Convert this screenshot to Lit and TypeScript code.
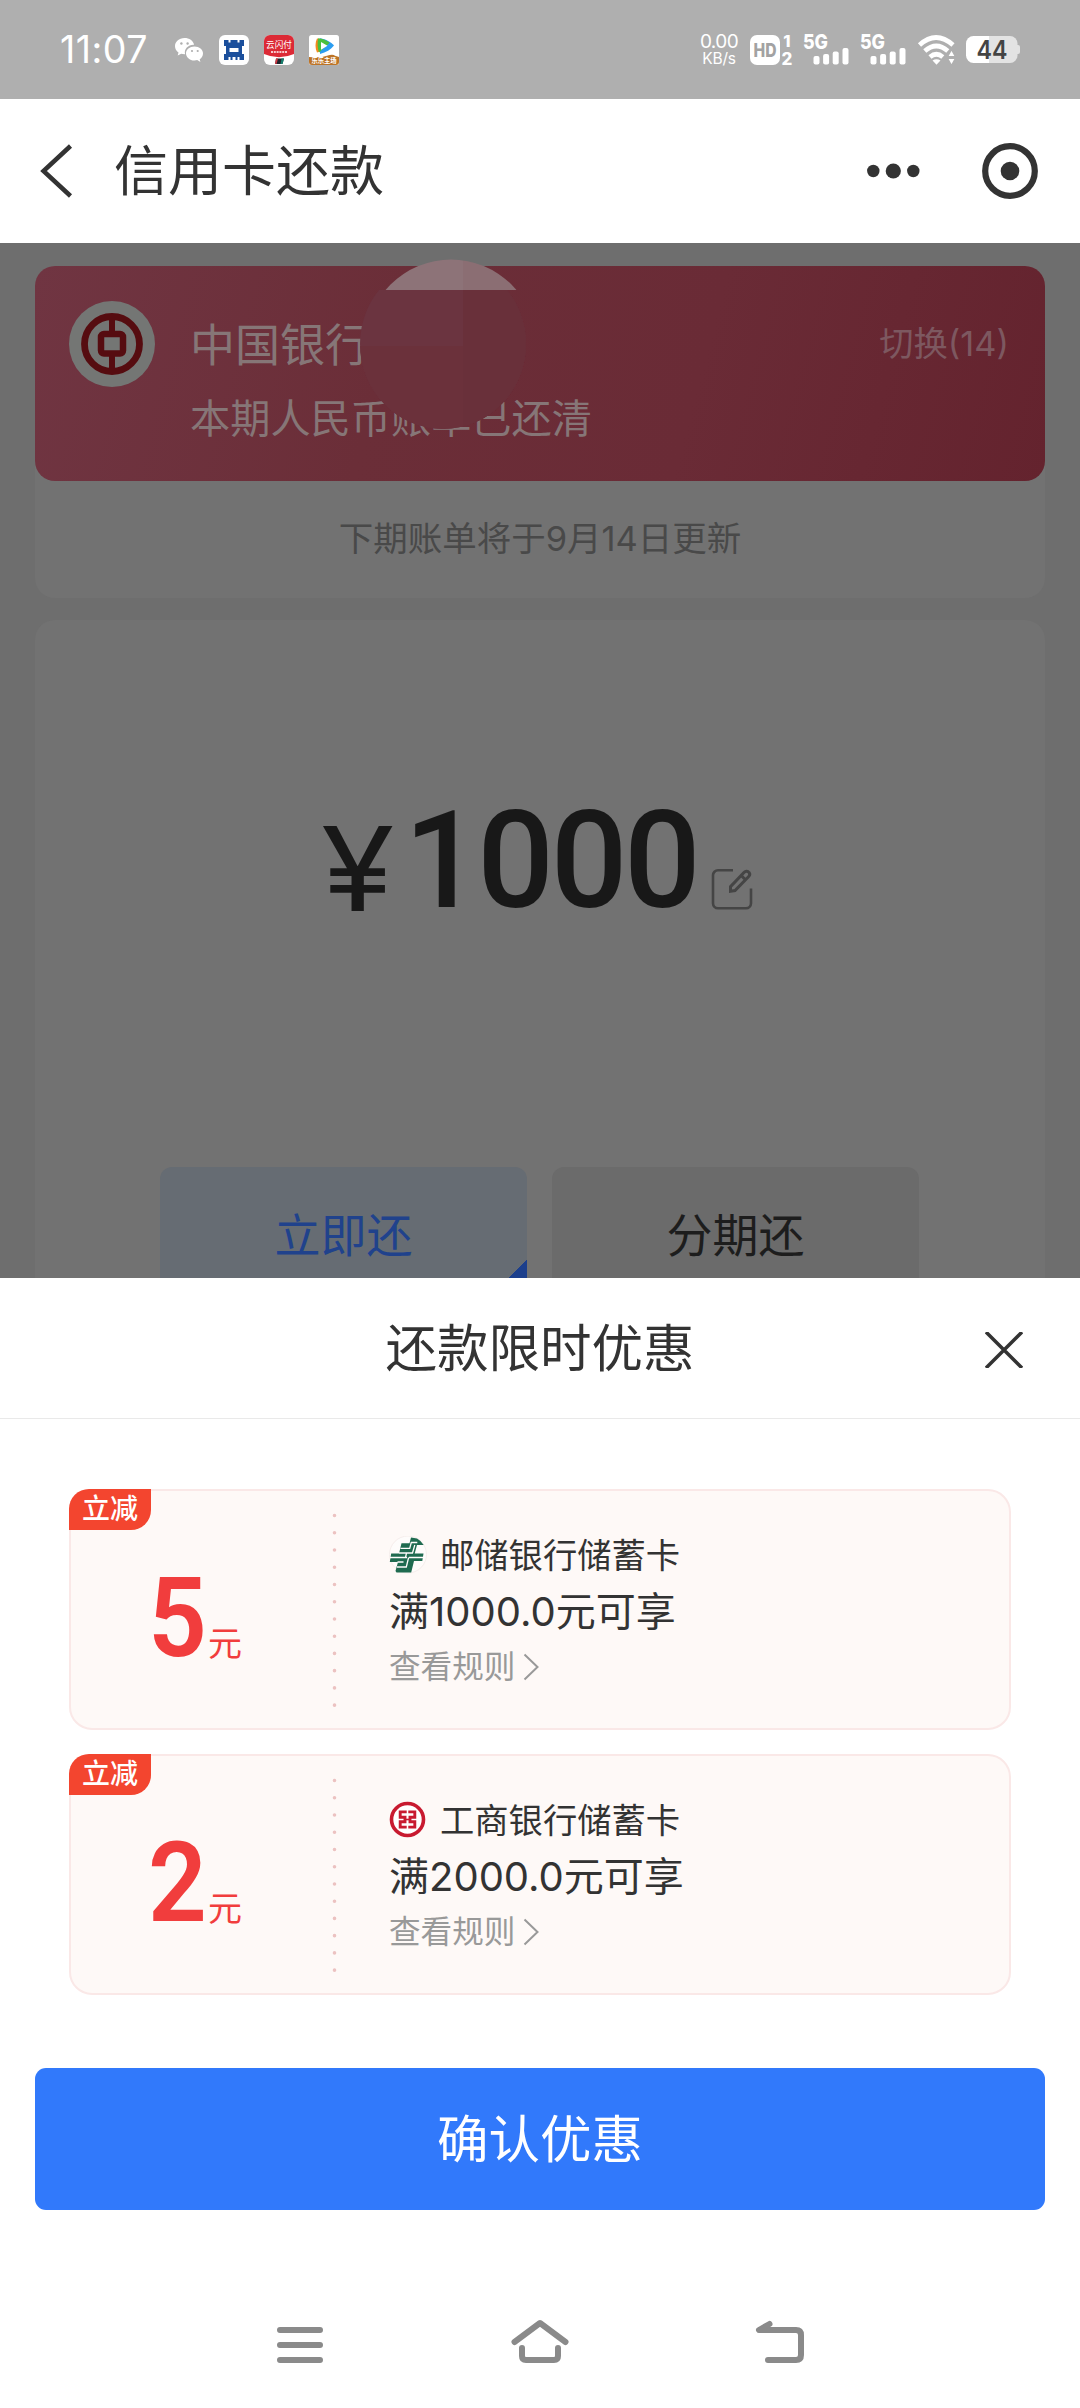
import { LitElement, html, css, svg } from "lit";
import { customElement, property } from "lit/decorators.js";

interface Coupon {
  amount: string;
  bank: string;
  logo: "psbc" | "icbc";
  condition: string;
}

const COUPONS: Coupon[] = [
  { amount: "5", bank: "邮储银行储蓄卡", logo: "psbc", condition: "满1000.0元可享" },
  { amount: "2", bank: "工商银行储蓄卡", logo: "icbc", condition: "满2000.0元可享" },
];

const signalBars = svg`
  <rect x="0" y="8" width="6" height="8.6" rx="2" />
  <rect x="9.6" y="6" width="6" height="10.6" rx="2" />
  <rect x="19.2" y="3.4" width="6" height="13.2" rx="2" />
  <rect x="29" y="0" width="6" height="16.6" rx="2" />`;

@customElement("status-bar")
export class StatusBar extends LitElement {
  static styles = css`
    :host {
      display: flex;
      height: 99px;
      box-sizing: border-box;
      padding: 0 60px;
      background: #afafaf;
      color: #fff;
      align-items: center;
      justify-content: space-between;
      font-family: Inter, "Noto Sans CJK SC", sans-serif;
    }
    .left,
    .right {
      display: flex;
      align-items: center;
    }
    .time {
      width: 114px;
      font-size: 37.500px;
      line-height: 46px;
      letter-spacing: 0.5px;
      white-space: nowrap;
    }
    .apps {
      display: flex;
      gap: 15px;
      align-items: center;
    }
    svg {
      display: block;
      overflow: visible;
    }
    .speed {
      display: flex;
      width: 40px;
      flex-direction: column;
      align-items: center;
      margin-right: 11px;
      white-space: nowrap;
    }
    .rate {
      font-size: 19px;
      line-height: 19px;
      letter-spacing: -0.6px;
    }
    .unit {
      font-size: 15.500px;
      line-height: 16px;
      letter-spacing: -0.2px;
    }
    .hd {
      margin-right: 11px;
    }
    .cell {
      margin-right: 12px;
    }
    .wifi {
      margin-right: 10px;
    }
  `;

  render() {
    return html`
      <div class="left">
        <div class="time">11:07</div>
        <div class="apps">
          <svg width="30" height="30" viewBox="0 0 30 30">
            <path fill="#fff" d="M10.500 3C4.900 3 1 6.700 1 11.200c0 2.600 1.300 4.800 3.500 6.300L3.700 20.500l3.500-1.800c1 .3 2.100.5 3.300.5h.6c-1.400-5.500 3.600-9.900 9-9.500C19.200 5.700 15.300 3 10.500 3z" />
            <path fill="#fff" d="M29 18.200c0-3.800-3.700-6.800-8.500-6.800s-8.500 3-8.500 6.800 3.500 7.300 8.500 7.300c1 0 1.900-.1 2.700-.4l3.200 1.900-.7-2.800c2-1.300 3.300-3.200 3.300-6z" />
            <g fill="#afafaf">
              <circle cx="7.400" cy="8.500" r="1.200" /><circle cx="13.600" cy="8.500" r="1.200" />
              <circle cx="18" cy="16" r="1.100" /><circle cx="23.700" cy="16" r="1.100" />
            </g>
          </svg>
          <svg width="30" height="30" viewBox="0 0 30 30">
            <rect width="30" height="30" rx="6" fill="#fff" />
            <path fill="#1b4f9c" fill-rule="evenodd" d="M5 5h4.500v2.500h2V5h7v2.500h2V5H25v6h-2v8h2v6h-4.500v-3h-2v3h-2v-3h-3v3h-2v-3h-2v3H5v-6h2v-8H5zM10.500 13v4h9v-4z" />
          </svg>
          <svg width="30" height="30" viewBox="0 0 30 30">
            <rect width="30" height="30" rx="6" fill="#fff" />
            <path fill="#dc2a36" d="M6 0h18a6 6 0 0 1 6 6v13q-15 6.500-30 0V6a6 6 0 0 1 6-6z" />
            <text x="15" y="13" text-anchor="middle" font-size="8.600" fill="#fff">云闪付</text>
            <path d="M7 17h16" stroke="#fff" stroke-width="1.600" stroke-dasharray="2 .8" />
            <path fill="#20252c" d="M12 23.500h8l-1.500 5.500H11z" />
            <path fill="#d83a45" d="M12 23.500h2l-1.500 5.500H11z" /><path fill="#14806f" d="M17.500 23.500H20l-1.500 5.500h-2z" />
          </svg>
          <svg width="30" height="30" viewBox="0 0 30 30">
            <rect width="30" height="30" rx="2.500" fill="#fff" />
            <path fill="#f58a1f" d="M8 3.500c-2 4-2 10 0 14l3-1V4z" />
            <path fill="#2b9df0" d="M11 3.200c6 .8 11 3.800 14 7.300-3 4-8 7-14 8.500z" />
            <path fill="#4bc03c" d="M9.200 3.200c5 .4 8 2 11.500 4.500L10 17.500c-1.500-4-1.800-10-.8-14.300z" />
            <path fill="#fff" d="M12 7l6.500 3.800L12 14.800z" />
            <path fill="#bd7427" d="M0 22q12 1 18-1.200 6-2 8 0l4 1.200v5a3 3 0 0 1-3 3H3a3 3 0 0 1-3-3z" />
            <text x="15" y="28.300" text-anchor="middle" font-size="6.300" font-weight="700" fill="#fff">乐乐主场</text>
          </svg>
        </div>
      </div>
      <div class="right">
        <div class="speed"><span class="rate">0.00</span><span class="unit">KB/s</span></div>
        <svg class="hd" width="43" height="30" viewBox="0 0 43 30">
          <rect width="30" height="30" rx="7" fill="#fff" />
          <text x="15" y="21.700" text-anchor="middle" font-size="18.500" font-weight="800" fill="#a2a2a2" textLength="23" lengthAdjust="spacingAndGlyphs">HD</text>
          <text x="37" y="12" text-anchor="middle" font-size="16.500" font-weight="800" fill="#fff">1</text>
          <text x="37" y="30" text-anchor="middle" font-size="17" font-weight="800" fill="#fff">2</text>
        </svg>
        ${[0, 1].map(
          () => html`<svg class="cell" width="45" height="31" viewBox="0 0 45 31" fill="#fff">
            <text x="-1" y="15" font-size="20.500" font-weight="800" textLength="25" lengthAdjust="spacingAndGlyphs">5G</text>
            <g transform="translate(9.500 14)">${signalBars}</g>
          </svg>`
        )}
        <svg class="wifi" width="38" height="30" viewBox="0 0 38 30">
          <g fill="none" stroke="#fff" stroke-width="4.700">
            <path d="M1.500 10q16.500-15 33.500 0" />
            <path d="M6.800 16q11.500-10 23 0" />
            <path d="M12 22q6.300-5.500 12.800 0" />
          </g>
          <path fill="#fff" d="M14.500 25.500q4-2.500 8 0l-4 4.300z" />
          <path fill="#fff" stroke="#afafaf" stroke-width="1.500" d="M33.500 14.500l4.200 7.300h-8.400zM33.500 30.500l-4.200-7.300h8.400z" />
        </svg>
        <svg width="54" height="27" viewBox="0 0 54 27">
          <defs>
            <linearGradient id="charge">
              <stop offset=".44" stop-color="#fff" /><stop offset=".44" stop-color="#e3e3e3" />
            </linearGradient>
          </defs>
          <path fill="#e3e3e3" d="M50 9h2a2 2 0 0 1 2 2v5a2 2 0 0 1-2 2h-2z" />
          <rect width="51.500" height="27" rx="7.500" fill="url(#charge)" />
          <text x="26" y="23" text-anchor="middle" font-size="25" font-weight="600" fill="#444" textLength="31" lengthAdjust="spacingAndGlyphs">44</text>
        </svg>
      </div>
    `;
  }
}

@customElement("coupon-card")
export class CouponCard extends LitElement {
  @property({ attribute: false }) coupon!: Coupon;

  static styles = css`
    :host {
      display: block;
      font-family: Inter, "Noto Sans CJK SC", sans-serif;
    }
    .card {
      position: relative;
      display: flex;
      box-sizing: border-box;
      height: 241px;
      border: 2px solid #fae8e7;
      border-radius: 23px;
      background: #fef9f7;
    }
    .tag {
      position: absolute;
      left: -2px;
      top: -2px;
      width: 82px;
      height: 41px;
      border-radius: 20px 0 20px 0;
      background: #f3452f;
      color: #fff;
      font-size: 28px;
      font-weight: 500;
      line-height: 41px;
      text-align: center;
    }
    .amount {
      display: flex;
      width: 250px;
      padding: 71px 0 0 77px;
      box-sizing: border-box;
      align-items: baseline;
      color: #f13d3d;
    }
    .number {
      display: block;
      width: 60px;
      font: 600 112px/112px Roboto, sans-serif;
      transform: scaleX(0.92);
      transform-origin: left;
    }
    .yuan {
      font-size: 34px;
      line-height: 40px;
    }
    .dots {
      width: 26px;
      flex: none;
    }
    .dots svg {
      display: block;
      margin: 22px 0 0 11px;
    }
    .details {
      padding: 39px 0 0 42px;
    }
    .bank {
      display: flex;
      height: 46px;
      align-items: center;
      gap: 13px;
      font-size: 34.300px;
      color: #333;
    }
    .bank svg {
      margin-top: 4px;
    }
    .condition {
      margin-top: 10px;
      font-size: 40px;
      line-height: 52px;
      color: #333;
    }
    .rules {
      display: flex;
      align-items: center;
      gap: 8px;
      margin-top: 6px;
      font-size: 31.600px;
      line-height: 46px;
      color: #999;
    }
  `;

  private logo() {
    return this.coupon.logo === "psbc"
      ? html`<svg width="38" height="38" viewBox="0 0 38 38">
          <circle cx="19" cy="18.500" r="18.500" fill="#fefcfb" stroke="#f6eeec" />
          <path fill="#1f6b50" d="M22 1.500 28 2.500Q32.500 5 34.700 9H28l-2.300 8.500H34.500L33.300 25H25l-2.800 11.500H7.500L6.500 35 9 26H.8l1.400-8.500H10L12.500 7.300h8z" />
          <path fill="none" stroke="#fefcfb" stroke-width="1.300" d="M11.500 12.300h9.200L22.300 6.500h6M10 17h13.500l2.300-8M1 21.500h17M20 21.500h14M17.500 17l-1 4.500M8.500 26h6M8 31h9.300l2.300-9.500" />
        </svg>`
      : html`<svg width="38" height="38" viewBox="0 0 38 38" fill="none" stroke="#c81a30">
          <circle cx="18.500" cy="18.500" r="16" fill="#fff" stroke-width="3.600" />
          <path stroke-width="2.900" d="M17.700 10.900h-6.500v5.300H16v4.600h-4.800v5.300h6.500M19.300 10.900h6.500v5.300H21v4.600h4.800v5.300h-6.500" />
          <path stroke-width="1.600" d="M16 18.500h5" />
        </svg>`;
  }

  render() {
    const c = this.coupon;
    return html`
      <div class="card">
        <div class="tag">立减</div>
        <div class="amount"><span class="number">${c.amount}</span><span class="yuan">元</span></div>
        <div class="dots">
          <svg width="5" height="196" viewBox="0 0 5 196">
            <line x1="2.500" y1="2.500" x2="2.500" y2="194" stroke="#ecc2c1" stroke-width="3.600" stroke-linecap="round" stroke-dasharray="0 17.240" />
          </svg>
        </div>
        <div class="details">
          <div class="bank">${this.logo()}<span>${c.bank}</span></div>
          <div class="condition">${c.condition}</div>
          <div class="rules">
            <span>查看规则</span>
            <svg width="16" height="28" viewBox="0 0 16 28" fill="none" stroke="#999" stroke-width="2"><path d="M1.500 1.500 14.500 14 1.500 26.500" /></svg>
          </div>
        </div>
      </div>
    `;
  }
}

@customElement("app-root")
export class AppRoot extends LitElement {
  static styles = css`
    :host {
      display: flex;
      flex-direction: column;
      width: 1080px;
      height: 2408px;
      overflow: hidden;
      background: #fff;
      color: #333;
      font-family: Inter, "Noto Sans CJK SC", sans-serif;
    }
    svg {
      display: block;
      flex: none;
    }
    .header {
      display: flex;
      height: 144px;
      flex: none;
      box-sizing: border-box;
      align-items: center;
      padding: 0 41px 0 40px;
    }
    .title {
      flex: 1;
      padding: 2px 0 0 41px;
      font-size: 54px;
      line-height: 60px;
    }
    .page {
      height: 1035px;
      flex: none;
      box-sizing: border-box;
      overflow: hidden;
      padding: 23px 35px 0;
      background: #6e6e6e;
    }
    .bill {
      height: 332px;
      border-radius: 20px;
      background: #727272;
    }
    .bank-card {
      position: relative;
      display: flex;
      height: 215px;
      box-sizing: border-box;
      padding: 35px 36px 0 34px;
      border-radius: 20px;
      background: linear-gradient(105deg, #703542 0%, #6b2e38 35%, #6a2b36 65%, #64232e 100%);
      color: #867677;
    }
    .bank-info {
      flex: 1;
      padding-left: 35px;
    }
    .bank-name {
      padding-top: 12px;
      font-size: 45px;
      line-height: 66px;
    }
    .bank-state {
      padding-top: 10px;
      font-size: 40.200px;
      line-height: 60px;
    }
    .switch {
      padding-top: 18px;
      font-size: 34.300px;
      line-height: 50px;
      color: #7d5860;
    }
    .smudge {
      position: absolute;
      left: 320px;
      top: -7px;
    }
    .next-bill {
      padding-top: 33px;
      text-align: center;
      font-size: 34.500px;
      line-height: 50px;
      color: #494949;
    }
    .repay {
      height: 800px;
      margin-top: 22px;
      border-radius: 20px;
      background: #727272;
    }
    .amount {
      display: flex;
      height: 400px;
      box-sizing: border-box;
      padding: 170px 0 0 286px;
      align-items: baseline;
      color: #181818;
    }
    .yen {
      width: 83px;
      font-size: 117px;
      line-height: 150px;
      transform: scaleX(1.14);
      transform-origin: left;
    }
    .digits {
      width: 307px;
      font: 500 135px/150px Roboto, sans-serif;
      letter-spacing: -3.400px;
      transform: translateY(-4px);
    }
    .options {
      display: grid;
      grid-template-columns: 367px 367px;
      gap: 25px;
      padding: 147px 0 0 125px;
    }
    .option {
      display: flex;
      height: 130px;
      align-items: center;
      justify-content: center;
      border-radius: 12px;
      background: #6b6b6b;
      color: #1d1d1d;
      font-size: 46px;
    }
    .option.active {
      background: linear-gradient(315deg, #1c3f8c 26.500px, transparent 26.500px), #666c73;
      color: #20428c;
    }
    .sheet {
      display: flex;
      flex: 1;
      flex-direction: column;
      background: #fff;
    }
    .sheet-head {
      display: grid;
      grid-template-columns: 1fr auto 1fr;
      height: 141px;
      box-sizing: border-box;
      align-items: center;
      border-bottom: 1px solid #e9e9e9;
    }
    .sheet-title {
      grid-column: 2;
      font-size: 51.500px;
      line-height: 60px;
    }
    .close {
      justify-self: end;
      margin: 3px 57px 0 0;
    }
    .coupons {
      display: flex;
      flex-direction: column;
      gap: 24px;
      padding: 70px 69px 0;
    }
    .confirm {
      height: 142px;
      margin: 73px 35px 0;
      border-radius: 11px;
      background: #3179fb;
      color: #fff;
      font-size: 51.500px;
      line-height: 142px;
      text-align: center;
    }
    .nav {
      display: flex;
      flex: 1;
      justify-content: center;
      gap: 180px;
      padding-top: 105px;
    }
  `;

  render() {
    return html`
      <status-bar></status-bar>
      <div class="header">
        <svg width="33" height="54" viewBox="0 0 33 54" fill="none" stroke="#333" stroke-width="4.500"><path d="M30.500 2 3.500 27l27 25" /></svg>
        <div class="title">信用卡还款</div>
        <svg width="174" height="58" viewBox="0 0 174 58">
          <g fill="#333">
            <circle cx="8.300" cy="29" r="6.200" /><circle cx="28.300" cy="29" r="7.600" /><circle cx="48.300" cy="29" r="6.200" />
            <circle cx="145" cy="29" r="9.300" />
          </g>
          <circle cx="145" cy="29" r="24.800" fill="none" stroke="#333" stroke-width="6.200" />
        </svg>
      </div>

      <div class="page">
        <div class="bill">
          <div class="bank-card">
            <svg width="86" height="86" viewBox="0 0 86 86">
              <circle cx="43" cy="43" r="43" fill="#747674" />
              <g fill="none" stroke="#560c10">
                <circle cx="43" cy="43" r="27.500" stroke-width="6.800" />
                <rect x="32" y="33" width="22" height="19.500" rx="3" stroke-width="6.500" />
                <path d="M43 14v18M43 54v18" stroke-width="6" />
              </g>
            </svg>
            <div class="bank-info">
              <div class="bank-name">中国银行</div>
              <div class="bank-state">本期人民币账单已还清</div>
            </div>
            <div class="switch">切换(14)</div>
            <svg class="smudge" width="174" height="174" viewBox="0 0 174 174">
              <defs>
                <clipPath id="disc"><ellipse cx="88" cy="85" rx="83" ry="85" /></clipPath>
                <clipPath id="cap"><circle cx="96" cy="86" r="85.500" /></clipPath>
              </defs>
              <g clip-path="url(#disc)">
                <rect y="31" width="174" height="143" fill="#6b3440" />
                <rect y="87" width="174" height="87" fill="#6b313b" />
                <rect x="108" y="31" width="66" height="143" fill="#69303a" />
              </g>
              <g clip-path="url(#cap)">
                <rect width="108" height="31" fill="#8d7378" />
                <rect x="108" width="66" height="31" fill="#8b6e73" />
              </g>
            </svg>
          </div>
          <div class="next-bill">下期账单将于9月14日更新</div>
        </div>

        <div class="repay">
          <div class="amount">
            <span class="yen">¥</span>
            <span class="digits">1000</span>
            <svg width="42" height="42" viewBox="0 0 42 42" fill="none" stroke="#454545" stroke-width="2.600">
              <path d="M22 1.300H7A5 5 0 0 0 2 6.300v28a5 5 0 0 0 5 5h28a5 5 0 0 0 5-5V19.500" />
              <path stroke-width="3" d="M19.500 22.200v-4.500L33.200 3.200a3 3 0 0 1 4.800.3 3 3 0 0 1-.3 4L24 21.500zM30.200 6.500l4.500 4.500" />
            </svg>
          </div>
          <div class="options">
            <div class="option active">立即还</div>
            <div class="option">分期还</div>
          </div>
        </div>
      </div>

      <div class="sheet">
        <div class="sheet-head">
          <div class="sheet-title">还款限时优惠</div>
          <svg class="close" width="38" height="36" viewBox="0 0 38 36" stroke="#333" stroke-width="3.500"><path d="M1 0l36 36M37 0 1 36" /></svg>
        </div>
        <div class="coupons">${COUPONS.map((c) => html`<coupon-card .coupon=${c}></coupon-card>`)}</div>
        <div class="confirm">确认优惠</div>
        <div class="nav">
          <svg width="60" height="60" viewBox="0 0 60 60" stroke="#8a8a8a" stroke-width="6" stroke-linecap="round"><path d="M10 15h40M10 30h40M10 45h40" /></svg>
          <svg width="60" height="60" viewBox="0 0 60 60" fill="none" stroke="#8a8a8a" stroke-width="6" stroke-linecap="round" stroke-linejoin="round"><path d="M4.500 27 30 8l25.500 19M12 33v8q0 4 4 4h28q4 0 4-4v-8" /></svg>
          <svg width="60" height="60" viewBox="0 0 60 60" fill="none" stroke="#8a8a8a" stroke-width="6" stroke-linecap="round" stroke-linejoin="round"><path d="M19.500 9 9 15h37q5 0 5 5v20q0 5-5 5H18" /></svg>
        </div>
      </div>
    `;
  }
}
